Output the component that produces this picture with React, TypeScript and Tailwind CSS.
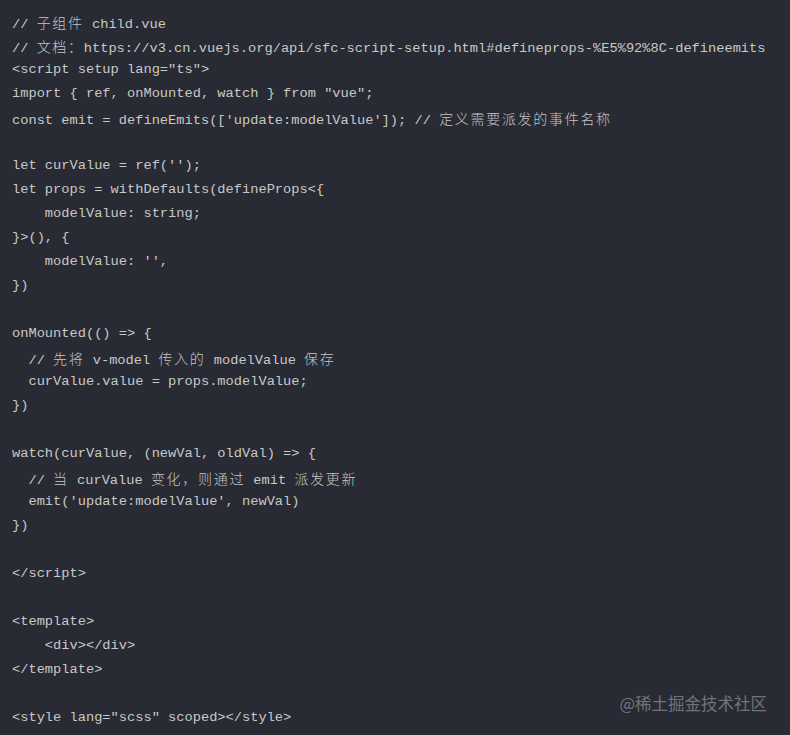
const lines: string[] = [
  "// 子组件 child.vue",
  "// 文档：https://v3.cn.vuejs.org/api/sfc-script-setup.html#defineprops-%E5%92%8C-defineemits",
  '<script setup lang="ts">',
  'import { ref, onMounted, watch } from "vue";',
  "const emit = defineEmits(['update:modelValue']); // 定义需要派发的事件名称",
  "",
  "let curValue = ref('');",
  "let props = withDefaults(defineProps<{",
  "    modelValue: string;",
  "}>(), {",
  "    modelValue: '',",
  "})",
  "",
  "onMounted(() => {",
  "  // 先将 v-model 传入的 modelValue 保存",
  "  curValue.value = props.modelValue;",
  "})",
  "",
  "watch(curValue, (newVal, oldVal) => {",
  "  // 当 curValue 变化，则通过 emit 派发更新",
  "  emit('update:modelValue', newVal)",
  "})",
  "",
  "</script>",
  "",
  "<template>",
  "    <div></div>",
  "</template>",
  "",
  '<style lang="scss" scoped></style>',
];

// split a line into ascii / cjk runs so the wide glyphs get their own spacing
function Line({ text }: { text: string }) {
  const parts = text.split(/([\u3000-\u9fff\uff00-\uffef]+)/);
  return (
    <div className="h-6 leading-6 whitespace-pre">
      {parts.map((p, i) =>
        /[\u3000-\u9fff\uff00-\uffef]/.test(p) ? (
          <span
            key={i}
            className="text-[14px] leading-6 tracking-[1.7px] font-light text-[#c4c4c4] [font-family:'Noto_Sans_CJK_SC',sans-serif]"
          >
            {p}
          </span>
        ) : (
          <span key={i}>{p || (text === "" ? " " : "")}</span>
        )
      )}
    </div>
  );
}

export default function App() {
  return (
    <div className="relative h-[735px] w-full overflow-hidden bg-[#282b33] px-3 pt-[10px] text-[13.7px] text-[#c8c8c8] [font-family:'Liberation_Mono','DejaVu_Sans_Mono',monospace]">
      {lines.map((l, i) => (
        <Line key={i} text={l} />
      ))}
      <div className="absolute bottom-[20px] right-[23px] text-[16.5px] leading-6 text-[#70737a] [font-family:'Noto_Sans_CJK_SC',sans-serif]">
        @稀土掘金技术社区
      </div>
    </div>
  );
}
